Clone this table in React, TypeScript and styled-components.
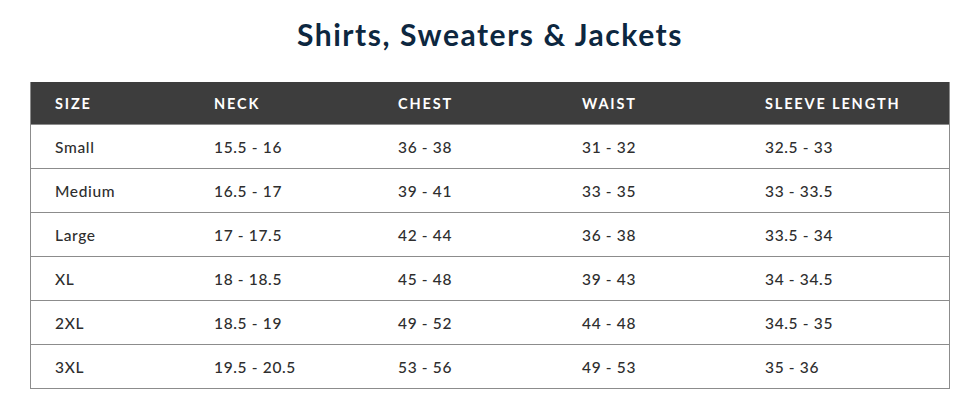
import React from "react";
import styled, { createGlobalStyle } from "styled-components";

const Global = createGlobalStyle`
  html, body { margin: 0; padding: 0; background: #fff; }
  body { font-family: "Lato", "Open Sans", sans-serif; }
`;

const Page = styled.div`
  width: 975px;
  height: 408px;
  padding: 15px 25px 0 30px;
  box-sizing: border-box;
  display: flex;
  flex-direction: column;
`;

const Title = styled.h1`
  margin: 0;
  height: 67px;
  font-family: "Lato", sans-serif;
  font-weight: 700;
  font-size: 30px;
  letter-spacing: 1.55px;
  color: #0d2740;
  text-align: center;
  line-height: 38px;
`;

const Table = styled.div`
  width: 920px;
  box-sizing: border-box;
  display: flex;
  flex-direction: column;
  border-left: 1px solid #8c8c8c;
  border-right: 1px solid #8c8c8c;
`;

const Row = styled.div<{ $header?: boolean }>`
  display: grid;
  grid-template-columns: 159px 184px 184px 183px 1fr;
  height: ${(p) => (p.$header ? "43px" : "44px")};
  box-sizing: border-box;
  align-items: center;
  background: ${(p) => (p.$header ? "#3d3d3d" : "#fff")};
  border-bottom: 1px solid #8c8c8c;
`;

const Cell = styled.div<{ $header?: boolean }>`
  padding-left: 24px;
  font-family: "Lato", sans-serif;
  font-size: ${(p) => (p.$header ? "14.5px" : "15.5px")};
  font-weight: ${(p) => (p.$header ? 700 : 500)};
  letter-spacing: ${(p) => (p.$header ? "1.85px" : "0.65px")};
  color: ${(p) => (p.$header ? "#fff" : "#2e2e2e")};
  white-space: nowrap;
`;

const headers = ["SIZE", "NECK", "CHEST", "WAIST", "SLEEVE LENGTH"];
const rows = [
  ["Small", "15.5 - 16", "36 - 38", "31 - 32", "32.5 - 33"],
  ["Medium", "16.5 - 17", "39 - 41", "33 - 35", "33 - 33.5"],
  ["Large", "17 - 17.5", "42 - 44", "36 - 38", "33.5 - 34"],
  ["XL", "18 - 18.5", "45 - 48", "39 - 43", "34 - 34.5"],
  ["2XL", "18.5 - 19", "49 - 52", "44 - 48", "34.5 - 35"],
  ["3XL", "19.5 - 20.5", "53 - 56", "49 - 53", "35 - 36"],
];

export default function App() {
  return (
    <>
      <Global />
      <Page>
        <Title>Shirts, Sweaters &amp; Jackets</Title>
        <Table>
          <Row $header>
            {headers.map((h) => (
              <Cell $header key={h}>{h}</Cell>
            ))}
          </Row>
          {rows.map((r) => (
            <Row key={r[0]}>
              {r.map((c, i) => (
                <Cell key={i}>{c}</Cell>
              ))}
            </Row>
          ))}
        </Table>
      </Page>
    </>
  );
}
